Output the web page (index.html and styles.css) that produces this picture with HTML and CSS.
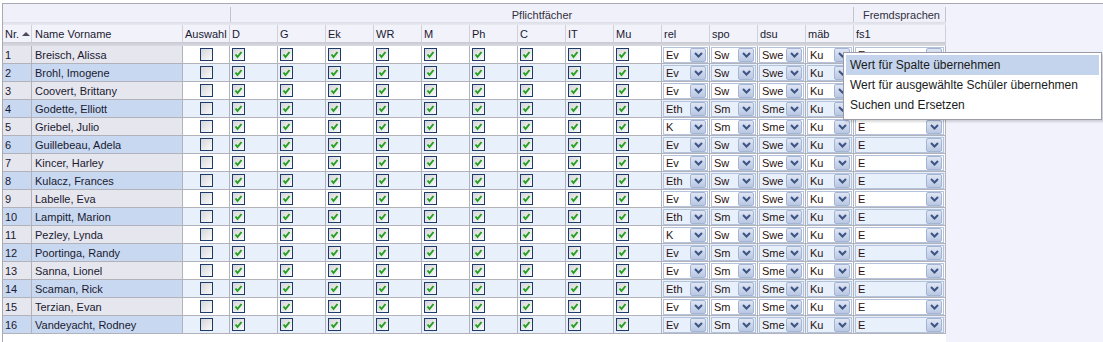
FILE: index.html
```html
<!DOCTYPE html>
<html lang="de">
<head>
    <meta charset="UTF-8">
    <title>Kurswahlen</title>
    <link rel="stylesheet" href="styles.css">
</head>
<body>
    <div class="frame">
        <div class="grid">
            <!-- Gruppenkopf -->
            <div class="hrow groups">
                <div class="gcell first"></div>
                <div class="gcell pflicht">Pflichtfächer</div>
                <div class="gcell fremd">Fremdsprachen</div>
            </div>
            <!-- Spaltenkopf -->
            <div class="hrow names">
                <div class="hcell">Nr.<span class="sort"></span></div>
                <div class="hcell">Name Vorname</div>
                <div class="hcell">Auswahl</div>
                <div class="hcell">D</div>
                <div class="hcell">G</div>
                <div class="hcell">Ek</div>
                <div class="hcell">WR</div>
                <div class="hcell">M</div>
                <div class="hcell">Ph</div>
                <div class="hcell">C</div>
                <div class="hcell">IT</div>
                <div class="hcell">Mu</div>
                <div class="hcell">rel</div>
                <div class="hcell">spo</div>
                <div class="hcell">dsu</div>
                <div class="hcell">mäb</div>
                <div class="hcell">fs1</div>
            </div>
            <div id="rows"></div>
        </div>

        <!-- Kontextmenü -->
        <div class="menu">
            <div class="item active">Wert für Spalte übernehmen</div>
            <div class="item">Wert für ausgewählte Schüler übernehmen</div>
            <div class="item">Suchen und Ersetzen</div>
        </div>
    </div>

    <script>
        var schueler = [
            ["Breisch, Alissa", "Ev", "Sw", "Swe"],
            ["Brohl, Imogene", "Ev", "Sw", "Swe"],
            ["Coovert, Brittany", "Ev", "Sw", "Swe"],
            ["Godette, Elliott", "Eth", "Sm", "Sme"],
            ["Griebel, Julio", "K", "Sm", "Sme"],
            ["Guillebeau, Adela", "Ev", "Sw", "Swe"],
            ["Kincer, Harley", "Ev", "Sw", "Swe"],
            ["Kulacz, Frances", "Eth", "Sw", "Swe"],
            ["Labelle, Eva", "Ev", "Sw", "Swe"],
            ["Lampitt, Marion", "Eth", "Sm", "Sme"],
            ["Pezley, Lynda", "K", "Sw", "Swe"],
            ["Poortinga, Randy", "Ev", "Sm", "Sme"],
            ["Sanna, Lionel", "Ev", "Sm", "Sme"],
            ["Scaman, Rick", "Eth", "Sm", "Sme"],
            ["Terzian, Evan", "Ev", "Sm", "Sme"],
            ["Vandeyacht, Rodney", "Ev", "Sm", "Sme"]
        ];

        var haken = '<svg width="11" height="11" viewBox="0 0 11 11"><polyline points="2.5,5.5 4.5,8 8.5,3" fill="none" stroke="#22a022" stroke-width="2"/></svg>';
        var pfeil = '<svg width="9" height="6" viewBox="0 0 9 6"><polyline points="1,1 4.5,4.5 8,1" fill="none" stroke="#3c5484" stroke-width="2"/></svg>';

        function combo(wert) {
            return '<div class="cell sel"><div class="combo"><span>' + wert + '</span><b class="btn">' + pfeil + '</b></div></div>';
        }

        var html = '';
        for (var i = 0; i < schueler.length; i++) {
            var s = schueler[i];
            html += '<div class="row">';
            html += '<div class="cell nr">' + (i + 1) + '</div>';
            html += '<div class="cell name">' + s[0] + '</div>';
            html += '<div class="cell mid"><span class="cb"></span></div>';
            for (var f = 0; f < 9; f++) {
                html += '<div class="cell chk"><span class="cb">' + haken + '</span></div>';
            }
            html += combo(s[1]) + combo(s[2]) + combo(s[3]) + combo('Ku') + combo('E');
            html += '</div>';
        }
        document.getElementById('rows').innerHTML = html;
    </script>
</body>
</html>
```

FILE: styles.css
```css
:root {
    --cols: 29px 151px 47px repeat(13, 48px) 92px;
}

body {
    margin: 0;
    background: #fff;
    font-family: "Liberation Sans", Arial, sans-serif;
    font-size: 11px;
    color: #1a1a30;
}

.frame {
    position: relative;
    margin: 3px 0 0 2px;
    height: 339px;
    border-top: 1px solid #a9a9b4;
    border-left: 1px solid #a9a9b4;
    background: #f2f2fc;
    overflow: hidden;
}

.grid {
    width: 943px;
    height: 100%;
    background: #fff;
}

/* Kopfzeilen */
.hrow {
    display: grid;
    grid-template-columns: var(--cols);
}

.hrow.groups {
    height: 21px;
    background: linear-gradient(#f0f0fa 0, #f0f0fa 18px, #dcdce4 18px, #e9e9f1 21px);
}

.hrow.names {
    height: 21px;
    background: linear-gradient(#f2f2fb 0, #f2f2fb 17px, #c9c9d2 17px, #dadae2 21px);
}

.gcell {
    display: flex;
    align-items: center;
    height: 18px;
    color: #303040;
}

.gcell.first {
    grid-column: 1 / 4;
}

.gcell.pflicht {
    grid-column: 4 / 17;
    justify-content: center;
    border-left: 1px solid #c4c4cc;
    border-right: 1px solid #c4c4cc;
    margin: 3px 0 0;
    height: 15px;
}

.gcell.fremd {
    justify-content: flex-end;
    padding-right: 5px;
    border-right: 1px solid #c4c4cc;
    margin: 3px 0 0;
    height: 15px;
}

.hcell {
    display: flex;
    align-items: center;
    height: 17px;
    padding-left: 2px;
    border-right: 1px solid #d0d0d8;
    box-sizing: border-box;
    white-space: nowrap;
    overflow: hidden;
}

.hcell:nth-child(2) {
    padding-left: 3px;
}

.sort {
    margin-left: 3px;
    width: 0;
    height: 0;
    border-left: 4px solid transparent;
    border-right: 4px solid transparent;
    border-bottom: 4px solid #4a4a5a;
}

/* Datenzeilen */
.row {
    display: grid;
    grid-template-columns: var(--cols);
    height: 18px;
}

.cell {
    display: flex;
    align-items: center;
    box-sizing: border-box;
    border-right: 1px solid #b2b2ba;
    border-bottom: 1px solid #b2b2ba;
    background: #fff;
    white-space: nowrap;
    overflow: hidden;
}

.row:nth-child(even) .cell {
    background: #e8f0fc;
}

.cell.nr {
    padding-left: 2px;
    background: #e6e6ee;
}

.cell.name {
    padding-left: 3px;
    background: #e6e6ee;
}

.row:nth-child(even) .cell.nr,
.row:nth-child(even) .cell.name {
    background: #c8d8f0;
}

.cell.mid {
    justify-content: center;
}

.cell.chk {
    padding-left: 2px;
}

.cb {
    display: flex;
    align-items: center;
    justify-content: center;
    width: 13px;
    height: 13px;
    box-sizing: border-box;
    border: 1px solid #1d3a6c;
    background: linear-gradient(135deg, #d6d6d8, #fafafa);
}

/* Auswahlfelder */
.cell.sel {
    padding: 0 1px;
}

.combo {
    flex: 1;
    display: flex;
    align-items: center;
    height: 16px;
    box-sizing: border-box;
    border: 1px solid #b4c2dc;
    padding-left: 2px;
    color: #2a1010;
}

.combo span {
    flex: 1;
}

.btn {
    display: flex;
    align-items: center;
    justify-content: center;
    width: 14px;
    height: 12px;
    margin-right: 1px;
    border: 1px solid #a4b4d4;
    border-radius: 2px;
    background: linear-gradient(#dfe6f4, #b9c7e2);
}

/* Kontextmenü */
.menu {
    position: absolute;
    left: 840px;
    top: 48px;
    width: 257px;
    padding: 2px 0 4px;
    border: 1px solid #9c9ca8;
    background: #fff;
    box-shadow: 2px 2px 2px rgba(0, 0, 0, 0.15);
    font-size: 12px;
    color: #1a1a1a;
}

.item {
    height: 20px;
    line-height: 20px;
    margin: 0 2px;
    padding-left: 4px;
}

.item.active {
    background: #c4d4ec;
}
```
